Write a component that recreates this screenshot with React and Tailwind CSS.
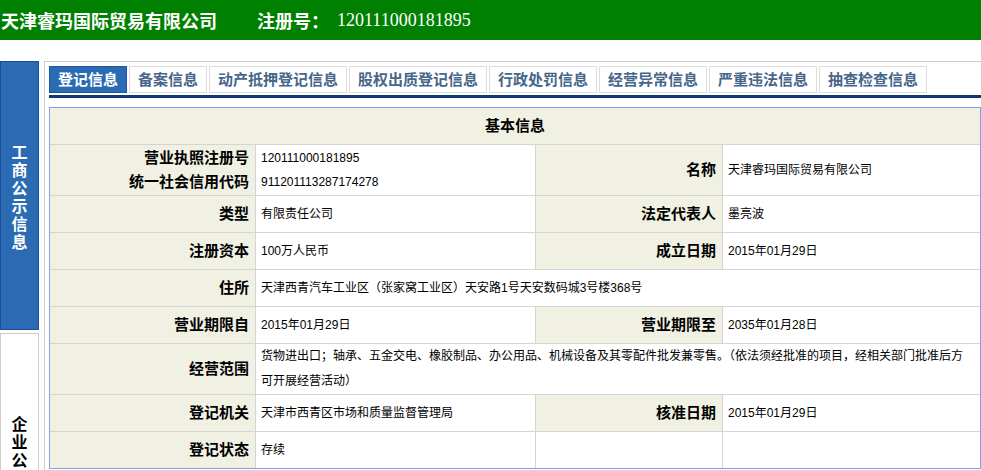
const Label = ({ children, w = "w-[206px]", white = false }) => (
  <div
    className={`${w} shrink-0 border-r border-[#d4d4d4] ${white ? "bg-white" : "bg-[#f1f1e3]"} flex flex-col items-end justify-center pr-[6px] text-[15px] font-bold leading-[24px] text-black`}
  >
    {children}
  </div>
);

const Value = ({ children, w = "", last = false }) => (
  <div
    className={`${last ? "flex-1" : `${w} shrink-0 border-r border-[#d4d4d4]`} flex flex-col justify-center pl-[5px] pr-[4px] text-[12px] leading-[24px] text-black`}
  >
    {children}
  </div>
);

const Row = ({ children, h = "h-[37px]", border = true }) => (
  <div className={`flex ${h} ${border ? "border-b border-[#d4d4d4]" : ""}`}>
    {children}
  </div>
);

const tabs = [
  "登记信息",
  "备案信息",
  "动产抵押登记信息",
  "股权出质登记信息",
  "行政处罚信息",
  "经营异常信息",
  "严重违法信息",
  "抽查检查信息",
];

const App = () => {
  return (
    <div className="w-[981px] h-[470px] overflow-hidden bg-white font-['Liberation_Sans','Noto_Sans_CJK_SC',sans-serif]">
      {/* top bar */}
      <div className="h-[40px] bg-[#008000] flex items-center text-white">
        <span className="pl-[1px] text-[18px] font-bold font-['Noto_Sans_CJK_SC',sans-serif]">
          天津睿玛国际贸易有限公司
        </span>
        <span className="ml-[40px] text-[18px] font-bold font-['Noto_Sans_CJK_SC',sans-serif]">
          注册号：
        </span>
        <span className="ml-[8px] text-[18px] font-['Liberation_Serif',serif]">
          120111000181895
        </span>
      </div>

      <div className="flex mt-[21px]">
        {/* side nav */}
        <div className="w-[39px] shrink-0 flex flex-col gap-[3px]">
          <div className="h-[269px] bg-[#2a6bb3] border border-[#1d4c9c] flex items-center justify-center">
            <div className="w-[16px] text-[16px] leading-[18px] font-bold text-white font-['Noto_Sans_CJK_SC',sans-serif]">
              工商公示信息
            </div>
          </div>
          <div className="h-[269px] bg-white border border-[#cccccc] flex items-center justify-center">
            <div className="w-[16px] text-[16px] leading-[18px] font-bold text-black font-['Noto_Sans_CJK_SC',sans-serif]">
              企业公示信息
            </div>
          </div>
        </div>

        {/* main */}
        <div className="ml-[5px] flex-1 border-l border-t border-[#cccccc] pl-[4px] pt-[4px]">
          <div className="flex gap-[2px] h-[27px]">
            {tabs.map((t, i) => (
              <div
                key={t}
                className={`px-[8px] border flex items-center text-[15px] font-bold font-['Noto_Sans_CJK_SC',sans-serif] ${
                  i === 0
                    ? "bg-[#2a6bb3] border-[#1e56a0] text-white"
                    : "bg-white border-[#dddddd] text-[#46668a]"
                }`}
              >
                {t}
              </div>
            ))}
          </div>
          <div className="mt-[2px] h-[3px] bg-[#0e3a6c]" />

          {/* table */}
          <div className="mt-[9px] border border-[#7f9fe8]">
            <Row>
              <div className="flex-1 bg-[#f1f1e3] flex items-center justify-center text-[15px] font-bold">
                基本信息
              </div>
            </Row>
            <Row h="h-[51px]">
              <Label>
                <div>营业执照注册号</div>
                <div>统一社会信用代码</div>
              </Label>
              <Value w="w-[280px]">
                <div>120111000181895</div>
                <div>911201113287174278</div>
              </Value>
              <Label w="w-[187px]">名称</Label>
              <Value last>天津睿玛国际贸易有限公司</Value>
            </Row>
            <Row>
              <Label>类型</Label>
              <Value w="w-[280px]">有限责任公司</Value>
              <Label w="w-[187px]">法定代表人</Label>
              <Value last>墨亮波</Value>
            </Row>
            <Row>
              <Label>注册资本</Label>
              <Value w="w-[280px]">100万人民币</Value>
              <Label w="w-[187px]">成立日期</Label>
              <Value last>2015年01月29日</Value>
            </Row>
            <Row>
              <Label>住所</Label>
              <Value last>天津西青汽车工业区（张家窝工业区）天安路1号天安数码城3号楼368号</Value>
            </Row>
            <Row>
              <Label>营业期限自</Label>
              <Value w="w-[280px]">2015年01月29日</Value>
              <Label w="w-[187px]">营业期限至</Label>
              <Value last>2035年01月28日</Value>
            </Row>
            <Row h="h-[51px]">
              <Label>经营范围</Label>
              <Value last>
                <div className="leading-[25px]">
                  货物进出口；轴承、五金交电、橡胶制品、办公用品、机械设备及其零配件批发兼零售。（依法须经批准的项目，经相关部门批准后方
                  <br />
                  可开展经营活动）
                </div>
              </Value>
            </Row>
            <Row>
              <Label>登记机关</Label>
              <Value w="w-[280px]">天津市西青区市场和质量监督管理局</Value>
              <Label w="w-[187px]">核准日期</Label>
              <Value last>2015年01月29日</Value>
            </Row>
            <Row h="h-[36px]" border={false}>
              <Label>登记状态</Label>
              <Value w="w-[280px]">存续</Value>
              <Label w="w-[187px]" white />
              <Value last />
            </Row>
          </div>
        </div>
      </div>
    </div>
  );
};

export default App;
